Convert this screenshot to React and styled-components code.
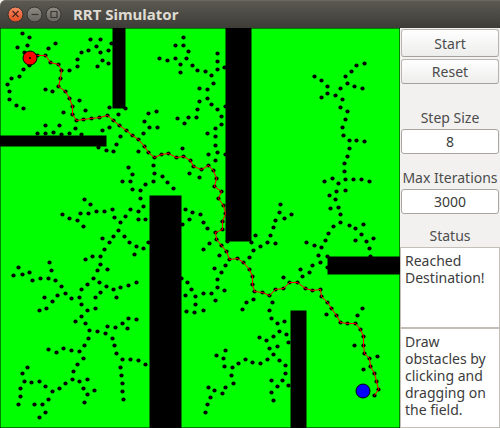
import React, { useState } from "react";
import styled, { createGlobalStyle } from "styled-components";

const GlobalStyle = createGlobalStyle`
  *, *::before, *::after { box-sizing: border-box; }
  body {
    margin: 0;
    background: #f2f1f0;
    color: #3c3c3c;
    font-family: "Noto Sans", "Open Sans", sans-serif;
    font-size: 14px;
  }
`;

const Window = styled.div`
  display: flex;
  flex-direction: column;
  min-height: 100vh;
  background: #f2f1f0;
`;

const TitleBar = styled.header`
  display: flex;
  align-items: center;
  gap: 11px;
  height: 28px;
  padding: 0 6px;
  border-radius: 6px 0 0 0;
  background: linear-gradient(#5c5a53, #3d3c37);
  box-shadow: inset 0 1px #6a6860;
`;

const WindowButtons = styled.div`
  display: flex;
  gap: 1px;
`;

const WindowButton = styled.button`
  display: block;
  width: 18px;
  height: 18px;
  padding: 0;
  border: 0;
  background: none;

  svg { display: block; }
`;

const Title = styled.h1`
  margin: 0;
  color: #dfdbd2;
  font-size: 15px;
  font-weight: 700;
  line-height: 20px;
`;

const Content = styled.main`
  display: grid;
  grid-template-columns: minmax(0, 1fr) 100px;
  flex: 1;
`;

const Field = styled.svg`
  display: block;
  width: 100%;
  height: auto;
  background: #00ff00;
`;

const Sidebar = styled.aside`
  display: flex;
  flex-direction: column;
`;

const Controls = styled.div`
  display: flex;
  flex-direction: column;
  gap: 13px;
  padding: 1px 1px 11px;
`;

const Buttons = styled.div`
  display: flex;
  flex-direction: column;
  gap: 2px;
  padding-bottom: 10px;
`;

const Button = styled.button`
  height: ${({ $tall }) => ($tall ? "28px" : "25px")};
  padding: 0;
  border: 1px solid #b9b5b0;
  border-bottom-color: #a5a19c;
  border-radius: 3px;
  background: linear-gradient(#ffffff, #ededec);
  color: #4c4c4c;
  font: inherit;
`;

const Label = styled.label`
  display: block;
  height: 22px;
  line-height: 22px;
  text-align: center;
  white-space: nowrap;
  color: #4c4c4c;
`;

const FormRow = styled.div`
  display: flex;
  flex-direction: column;
`;

const NumberInput = styled.input`
  width: 100%;
  height: 25px;
  padding: 0;
  border: 1px solid #aaa69f;
  border-radius: 3px;
  background: #ffffff;
  color: #3c3c3c;
  font: inherit;
  text-align: center;
`;

const MessageBox = styled.textarea`
  display: block;
  width: 100%;
  flex: ${({ $grow }) => ($grow ? "1 0 100px" : "0 0 81px")};
  padding: 4px;
  border: 1px solid #c4beb8;
  border-radius: 0;
  outline: 0;
  resize: none;
  overflow: hidden;
  background: #ffffff;
  color: #3c3c3c;
  font: inherit;
  line-height: 17px;
`;

const parse = (text) => text.trim().split(/\s+/).map((pair) => pair.split(",").map(Number));

const nodes = parse(`
22,5 29,9 27,17 17,19 24,24 29,37 48,20 55,15 23,41 19,48 11,50 7,56 9,63 9,71 16,77 23,80
45,61 52,63 69,42 77,38 77,31 81,24 88,22 96,18 90,11 100,11 100,24 108,22 102,32 108,35 97,38 111,15
79,72 85,82 63,84 45,97 59,97 37,105 45,105 53,104 61,106 69,105 75,100 81,106 109,79 118,86 125,80
109,99 102,102 120,108 116,116 113,123 106,122 98,119
183,9 175,17 183,17 188,23 159,30 167,32 175,30 186,30 180,36 180,44 192,37 197,42 205,43 211,47
217,25 217,33 217,41 224,39 213,55 199,60 207,61 207,70 199,73 211,76 197,81 217,81 225,78 196,89
188,89 184,95 177,90 221,88 221,96 215,100 207,105 215,108 215,117 217,124 208,126 225,126 215,132
182,120 148,85 156,83 144,93 149,99 157,99 143,105 138,123
314,48 321,52 327,58 327,65 321,69 335,67 340,60 347,55 345,48 351,43 356,37 364,35 354,58 362,60
342,71 340,79 347,83 345,91 342,99 343,107 349,112 356,112 364,113 349,120 347,128 344,135
128,139 132,146 122,153 130,153 132,161 84,171 90,176 62,186 69,190 77,192 80,185 88,185 83,198
96,183 104,183 112,181 114,189 120,194 125,188 130,181 118,202 113,208 124,208 129,214 134,226
102,210 109,214 104,221 100,228 92,228 85,231 100,236 97,242 107,241 93,250 99,254 87,256 81,261
106,258 113,261 120,259 128,257 100,264 18,239 13,247 22,246 29,244 32,252 40,250 48,250 49,234
51,242 55,252 61,258 65,265 57,267
153,137 154,145 162,148 153,153 145,156 167,154 173,160 140,162 140,170 143,178 138,183 138,191
145,191 189,145 199,149 148,214 143,220 136,218 185,181 192,184 200,186 189,191 182,196 203,194
207,200 209,215 203,221 219,227 225,237 214,240 221,244 217,251 217,259 224,262 211,265 203,265
195,268 185,267 191,261 187,254 181,250 136,254 255,207 251,214 260,218 267,214 253,222 249,229 227,213
344,143 332,150 324,153 338,155 345,151 353,151 361,151 369,153 345,162 336,163 329,167 335,171
338,179 330,180 340,186 340,194 349,197 355,200 363,196 361,206 373,210 366,213 355,212 369,220
370,228 333,198 328,205 325,212 321,219 314,217 306,214 318,227 327,228 320,234 327,239 312,237
309,244 300,241 302,248 283,249 280,176 279,184 275,192 284,190 291,186 273,199 270,207 275,215
44,269 52,273 46,280 39,282 71,270 79,269 81,276 87,282 95,280 95,269 116,269 81,288 75,293 85,295
89,302 97,303 105,305 107,298 115,299 122,295 128,290 127,300 112,310 114,317 116,325 122,331
130,331 120,339 121,347 122,355 122,363 123,371 88,310 84,317 79,323 71,322 63,320 56,324 48,321
83,330 77,336 73,343 72,351 79,353 87,351 83,360 87,366 94,362 84,374 65,355 59,360 52,363 45,358
39,353 31,354 24,353 22,345 27,339 20,360 20,368 18,376 48,371 42,376 34,376 45,384 39,389
136,291 138,332 145,336 195,276 186,283 194,284 203,282 215,272 242,281 246,274 253,271 259,309
266,312 225,322 216,327 223,330 224,338 232,339 238,335 245,331 252,334 260,335 267,331 231,347
233,355 225,359 222,365 208,359 214,362 210,369 207,376 205,384
272,274 269,282 271,290 277,295 284,293 279,303 286,306 273,308 288,314 277,318 269,320 273,326
279,332 285,337 285,345 282,352 288,357 271,352 277,358 271,364 273,372 326,286 357,287 362,280
354,317 377,328 363,341
`);

const route = parse(`
37,27 45,27 50,34 58,36 61,42 60,50 58,58 65,63 69,70 72,78 72,86 76,92 83,91 91,90 99,89
107,87 113,92 119,97 126,102 132,107 138,111 144,118 148,124 154,129 161,126 168,125 176,129
183,128 190,132 193,138 201,141 208,137 213,142 216,150 214,158 221,163 218,170 223,177 225,185
222,193 222,201 215,204 216,211 221,217 226,223 229,231 237,230 243,234 249,241 252,248 252,256
254,263 262,264 269,267 275,261 283,260 289,254 297,254 305,260 312,262 320,261 321,268 327,274
331,280 336,287 340,294 347,295 355,295 360,301 363,308 363,317 364,325 369,330 370,338 374,345
376,353 378,361 374,367
`);

const obstacles = [
  [113, 0, 12, 80],
  [0, 108, 106, 10],
  [226, 0, 25, 213],
  [150, 168, 31, 232],
  [291, 283, 15, 117],
  [328, 229, 72, 17],
];

const start = [30, 30];
const goal = [363, 363];

function SimulationField() {
  return (
    <Field viewBox="0 0 400 400" role="img" aria-label="RRT field">
      <rect width="400" height="400" fill="#00ff00" />
      {obstacles.map(([x, y, w, h]) => (
        <rect key={`${x}-${y}`} x={x} y={y} width={w} height={h} stroke="#000" strokeWidth="1" />
      ))}
      <g transform="translate(0.5 0.5)">
        {[...nodes, ...route].map(([x, y], i) => (
          <circle key={i} cx={x} cy={y} r="2.1" />
        ))}
        <polyline
          points={[start, ...route].map((p) => p.join(",")).join(" ")}
          fill="none"
          stroke="#f00"
          strokeWidth="1"
        />
      </g>
      <circle cx={start[0]} cy={start[1]} r="7" fill="#f00" stroke="#000" />
      <circle cx={start[0]} cy={start[1]} r="1" />
      <circle cx={goal[0]} cy={goal[1]} r="7" fill="#00f" stroke="#000" />
      <rect width="400" height="400" fill="none" stroke="#000" strokeWidth="1" />
    </Field>
  );
}

const glyphs = {
  Close: "M6 6 L12 12 M12 6 L6 12",
  Minimize: "M6 9.5 H13",
  Maximize: "M6.5 6.5 H12.5 V12.5 H6.5 Z",
};

function WindowControl({ name }) {
  const close = name === "Close";
  return (
    <WindowButton type="button" aria-label={name}>
      <svg width="18" height="18" viewBox="0 0 18 18">
        <defs>
          <linearGradient id={`fill-${name}`} x1="0" y1="0" x2="0" y2="1">
            <stop offset="0" stopColor={close ? "#f58a67" : "#8e8c85"} />
            <stop offset="1" stopColor={close ? "#e34e1f" : "#66645e"} />
          </linearGradient>
        </defs>
        <circle cx="9.5" cy="9.5" r="7.5" fill={`url(#fill-${name})`} stroke="#33322e" />
        <path d={glyphs[name]} transform="translate(0.5 0)" fill="none" stroke={close ? "#4a2417" : "#393833"} strokeWidth="1.2" />
      </svg>
    </WindowButton>
  );
}

export default function App() {
  const [stepSize, setStepSize] = useState("8");
  const [maxIterations, setMaxIterations] = useState("3000");

  return (
    <>
      <GlobalStyle />
      <Window>
        <TitleBar>
          <WindowButtons>
            <WindowControl name="Close" />
            <WindowControl name="Minimize" />
            <WindowControl name="Maximize" />
          </WindowButtons>
          <Title>RRT Simulator</Title>
        </TitleBar>
        <Content>
          <SimulationField />
          <Sidebar>
            <Controls>
              <Buttons>
                <Button type="button" $tall>Start</Button>
                <Button type="button">Reset</Button>
              </Buttons>
              <FormRow>
                <Label htmlFor="step-size">Step Size</Label>
                <NumberInput id="step-size" value={stepSize} onChange={(e) => setStepSize(e.target.value)} />
              </FormRow>
              <FormRow>
                <Label htmlFor="max-iterations">Max Iterations</Label>
                <NumberInput
                  id="max-iterations"
                  value={maxIterations}
                  onChange={(e) => setMaxIterations(e.target.value)}
                />
              </FormRow>
            </Controls>
            <Label htmlFor="status">Status</Label>
            <MessageBox id="status" readOnly value="Reached Destination!" />
            <MessageBox
              $grow
              aria-label="Instructions"
              readOnly
              value="Draw obstacles by clicking and dragging on the field."
            />
          </Sidebar>
        </Content>
      </Window>
    </>
  );
}
